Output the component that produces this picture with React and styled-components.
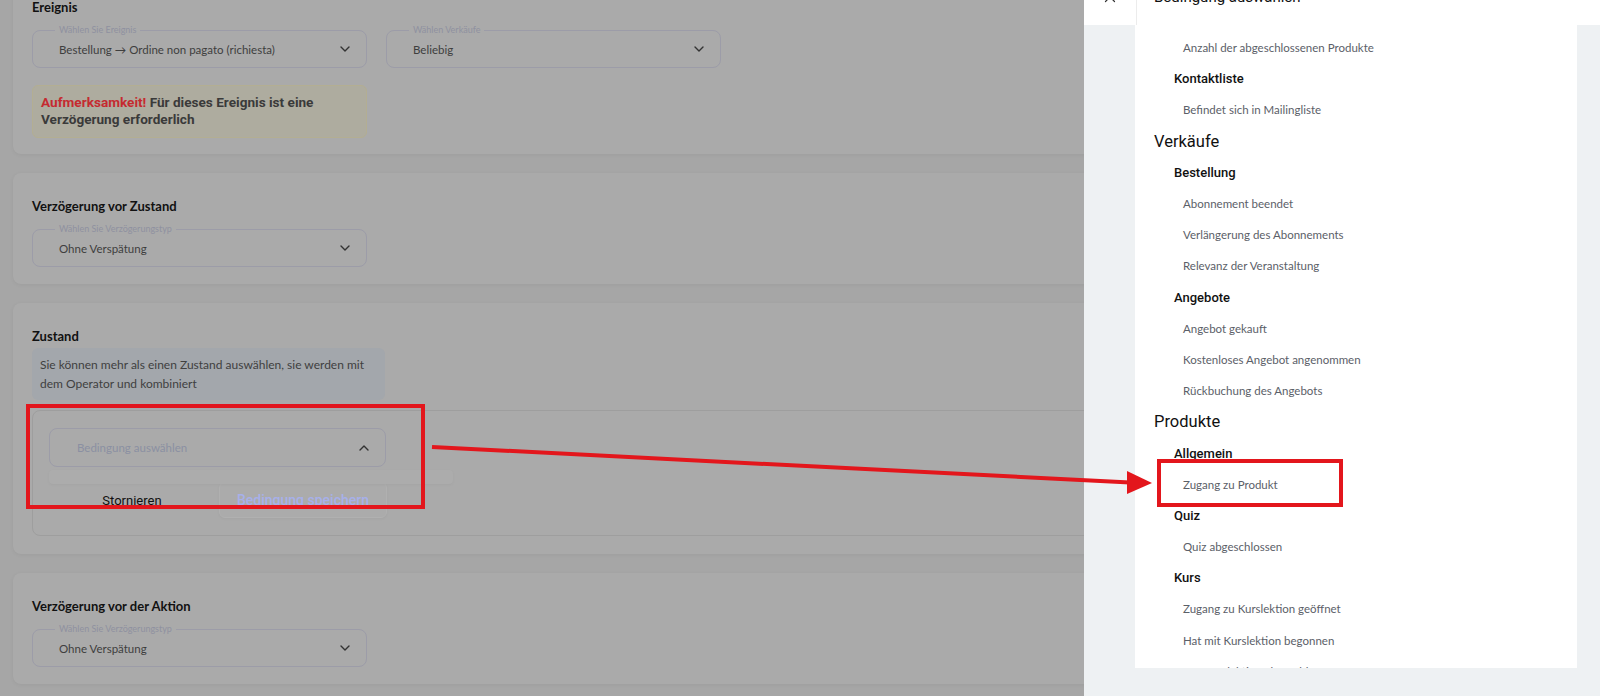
import React from "react";
import styled, { createGlobalStyle } from "styled-components";
import { X } from "lucide-react";

const GlobalStyle = createGlobalStyle`
  html, body { margin: 0; padding: 0; }
  body {
    background: #a6a6a6;
    overflow: hidden;
    font-family: Lato, "Noto Sans", sans-serif;
  }
  * { box-sizing: border-box; }
`;

const Screen = styled.div`
  position: relative;
  width: 1600px;
  height: 696px;
  overflow: hidden;
  background: #a6a6a6;
`;

const Page = styled.div`
  display: flex;
  flex-direction: column;
  gap: 19px;
  padding: 0 13px;
  margin-top: -26px;
`;

const Card = styled.section`
  background: #aaaaaa;
  border-radius: 8px;
  padding: 24px 19px ${(p) => p.$pb || 17}px;
  box-shadow: 0 1px 4px rgba(0, 0, 0, 0.05);
  display: flex;
  flex-direction: column;
`;

const CardTitle = styled.h3`
  margin: 0;
  font-family: Lato, sans-serif;
  font-weight: 700;
  font-size: 13px;
  line-height: 18px;
  color: #111;
  margin-bottom: ${(p) => p.$gap ?? 14}px;
`;

const FieldRow = styled.div`
  display: flex;
  gap: 19px;
`;

const SelectBox = styled.div`
  position: relative;
  width: ${(p) => p.$w || 335}px;
  height: ${(p) => p.$h || 38}px;
  border: 1px solid #9c9ca8;
  border-radius: 8px;
  display: flex;
  align-items: center;
  justify-content: space-between;
  padding: 0 16px 0 ${(p) => p.$pl || 26}px;
`;

const FieldLabel = styled.span`
  position: absolute;
  top: -7px;
  left: 22px;
  padding: 0 4px;
  background: #aaaaaa;
  font-family: Lato, sans-serif;
  font-size: 9px;
  line-height: 12px;
  color: #8f91a0;
`;

const SelectValue = styled.span`
  font-family: Lato, sans-serif;
  font-size: 11.5px;
  color: ${(p) => (p.$placeholder ? "#8b90a2" : "#3e3e3e")};
`;

const Chevron = ({ up }) => (
  <svg width="10" height="6" viewBox="0 0 10 6" fill="none">
    <polyline
      points={up ? "1,5 5,1 9,5" : "1,1 5,5 9,1"}
      stroke="#333"
      strokeWidth="1.4"
      strokeLinecap="round"
      strokeLinejoin="round"
    />
  </svg>
);

const Warning = styled.div`
  margin-top: 17px;
  width: 335px;
  height: 53px;
  border: 1px solid #b3ae92;
  background: #aeac9f;
  border-radius: 6px;
  padding: 8px 8px;
  font-family: Roboto, sans-serif;
  font-weight: 700;
  font-size: 13.6px;
  line-height: 16.5px;
  color: #3a3a3a;
`;

const Attention = styled.span`
  color: #c52a30;
`;

const InfoBox = styled.div`
  margin-top: 3px;
  width: 353px;
  height: 52px;
  background: #a3a7ac;
  border-radius: 6px;
  padding: 7px 8px;
  font-family: Lato, sans-serif;
  font-size: 12px;
  line-height: 19px;
  color: #404040;
`;

const Conditions = styled.div`
  position: relative;
  margin-top: 10px;
  height: 126px;
  border: 1px solid #9e9e9e;
  border-radius: 8px;
  padding: 17px 16px;
  display: flex;
  flex-direction: column;
`;

const Popover = styled.div`
  position: absolute;
  left: 16px;
  top: 59px;
  width: 404px;
  height: 14px;
  background: #acacac;
  border-radius: 4px;
  box-shadow: 0 1px 3px rgba(0, 0, 0, 0.04);
`;

const Buttons = styled.div`
  display: flex;
  gap: 4px;
  margin-top: 15px;
  width: 338px;
`;

const Button = styled.button`
  flex: 1;
  height: 36px;
  border-radius: 6px;
  border: ${(p) => (p.$primary ? "1px solid #b0b0b0" : "none")};
  background: ${(p) => (p.$primary ? "#ababab" : "transparent")};
  box-shadow: ${(p) => (p.$primary ? "0 1px 3px rgba(0,0,0,0.04)" : "none")};
  font-family: Roboto, sans-serif;
  font-size: ${(p) => (p.$primary ? 14 : 13)}px;
  font-weight: ${(p) => (p.$primary ? 500 : 400)};
  color: ${(p) => (p.$primary ? "#a7b0ea" : "#111")};
  padding: 0;
`;

/* Drawer */
const Drawer = styled.aside`
  position: absolute;
  top: 0;
  right: 0;
  bottom: 0;
  width: 516px;
  background: #eef1f3;
  display: flex;
  flex-direction: column;
`;

const DrawerHeader = styled.header`
  margin-top: -31px;
  height: 56px;
  background: #fff;
  display: flex;
  align-items: center;
  flex-shrink: 0;
`;

const CloseCol = styled.div`
  width: 53px;
  height: 100%;
  border-right: 1px solid #ececec;
  display: flex;
  align-items: center;
  justify-content: center;
  color: #333;
`;

const DrawerTitle = styled.h2`
  margin: 0 0 0 17px;
  font-family: Roboto, sans-serif;
  font-weight: 400;
  font-size: 15px;
  color: #111;
`;

const Panel = styled.div`
  margin: 0 23px 0 51px;
  height: 643px;
  background: #fff;
  overflow: hidden;
  padding-top: 7px;
`;

const Row = styled.div`
  height: 31.2px;
  display: flex;
  align-items: center;
  padding-left: ${(p) => (p.$kind === "section" ? 19 : p.$kind === "sub" ? 39 : 48)}px;
  font-family: ${(p) => (p.$kind === "item" ? "Lato, sans-serif" : "Roboto, sans-serif")};
  font-size: ${(p) => (p.$kind === "section" ? 16.5 : p.$kind === "sub" ? 13 : 11.5)}px;
  font-weight: ${(p) => (p.$kind === "sub" ? 500 : 400)};
  color: ${(p) => (p.$kind === "item" ? "#5b6068" : "#111")};
`;

/* Annotations */
const RedBox = styled.div`
  position: absolute;
  border: 4px solid #e3161c;
  pointer-events: none;
`;

const ArrowSvg = styled.svg`
  position: absolute;
  left: 0;
  top: 0;
  pointer-events: none;
`;

const rows = [
  ["item", "Anzahl der abgeschlossenen Produkte"],
  ["sub", "Kontaktliste"],
  ["item", "Befindet sich in Mailingliste"],
  ["section", "Verkäufe"],
  ["sub", "Bestellung"],
  ["item", "Abonnement beendet"],
  ["item", "Verlängerung des Abonnements"],
  ["item", "Relevanz der Veranstaltung"],
  ["sub", "Angebote"],
  ["item", "Angebot gekauft"],
  ["item", "Kostenloses Angebot angenommen"],
  ["item", "Rückbuchung des Angebots"],
  ["section", "Produkte"],
  ["sub", "Allgemein"],
  ["item", "Zugang zu Produkt"],
  ["sub", "Quiz"],
  ["item", "Quiz abgeschlossen"],
  ["sub", "Kurs"],
  ["item", "Zugang zu Kurslektion geöffnet"],
  ["item", "Hat mit Kurslektion begonnen"],
  ["item", "Hat Kurslektion abgeschlossen"],
];

const Select = ({ label, value, placeholder, up, ...rest }) => (
  <SelectBox {...rest}>
    {label && <FieldLabel>{label}</FieldLabel>}
    <SelectValue $placeholder={placeholder}>{value}</SelectValue>
    <Chevron up={up} />
  </SelectBox>
);

export default function App() {
  return (
    <Screen>
      <GlobalStyle />
      <Page>
        <Card $pb={16}>
          <CardTitle>Ereignis</CardTitle>
          <FieldRow>
            <Select
              label="Wählen Sie Ereignis"
              value="Bestellung → Ordine non pagato (richiesta)"
            />
            <Select label="Wählen Verkäufe" value="Beliebig" />
          </FieldRow>
          <Warning>
            <Attention>Aufmerksamkeit!</Attention> Für dieses Ereignis ist eine
            Verzögerung erforderlich
          </Warning>
        </Card>

        <Card>
          <CardTitle>Verzögerung vor Zustand</CardTitle>
          <Select label="Wählen Sie Verzögerungstyp" value="Ohne Verspätung" />
        </Card>

        <Card $pb={18}>
          <CardTitle $gap={0}>Zustand</CardTitle>
          <InfoBox>
            Sie können mehr als einen Zustand auswählen, sie werden mit dem
            Operator und kombiniert
          </InfoBox>
          <Conditions>
            <Select
              $w={337}
              $h={39}
              $pl={27}
              value="Bedingung auswählen"
              placeholder
              up
            />
            <Popover />
            <Buttons>
              <Button>Stornieren</Button>
              <Button $primary>Bedingung speichern</Button>
            </Buttons>
          </Conditions>
        </Card>

        <Card>
          <CardTitle>Verzögerung vor der Aktion</CardTitle>
          <Select label="Wählen Sie Verzögerungstyp" value="Ohne Verspätung" />
        </Card>
      </Page>

      <Drawer>
        <DrawerHeader>
          <CloseCol>
            <X size={18} strokeWidth={1.6} />
          </CloseCol>
          <DrawerTitle>Bedingung auswählen</DrawerTitle>
        </DrawerHeader>
        <Panel>
          {rows.map(([kind, text], i) => (
            <Row key={i} $kind={kind}>
              {text}
            </Row>
          ))}
        </Panel>
      </Drawer>

      <RedBox style={{ left: 26, top: 404, width: 399, height: 105 }} />
      <RedBox style={{ left: 1157, top: 459, width: 186, height: 48 }} />
      <ArrowSvg width="1600" height="696" viewBox="0 0 1600 696">
        <line
          x1="432"
          y1="447"
          x2="1130"
          y2="482.5"
          stroke="#e3161c"
          strokeWidth="4"
        />
        <polygon points="1127,471 1152,483 1127,494" fill="#e3161c" />
      </ArrowSvg>
    </Screen>
  );
}
